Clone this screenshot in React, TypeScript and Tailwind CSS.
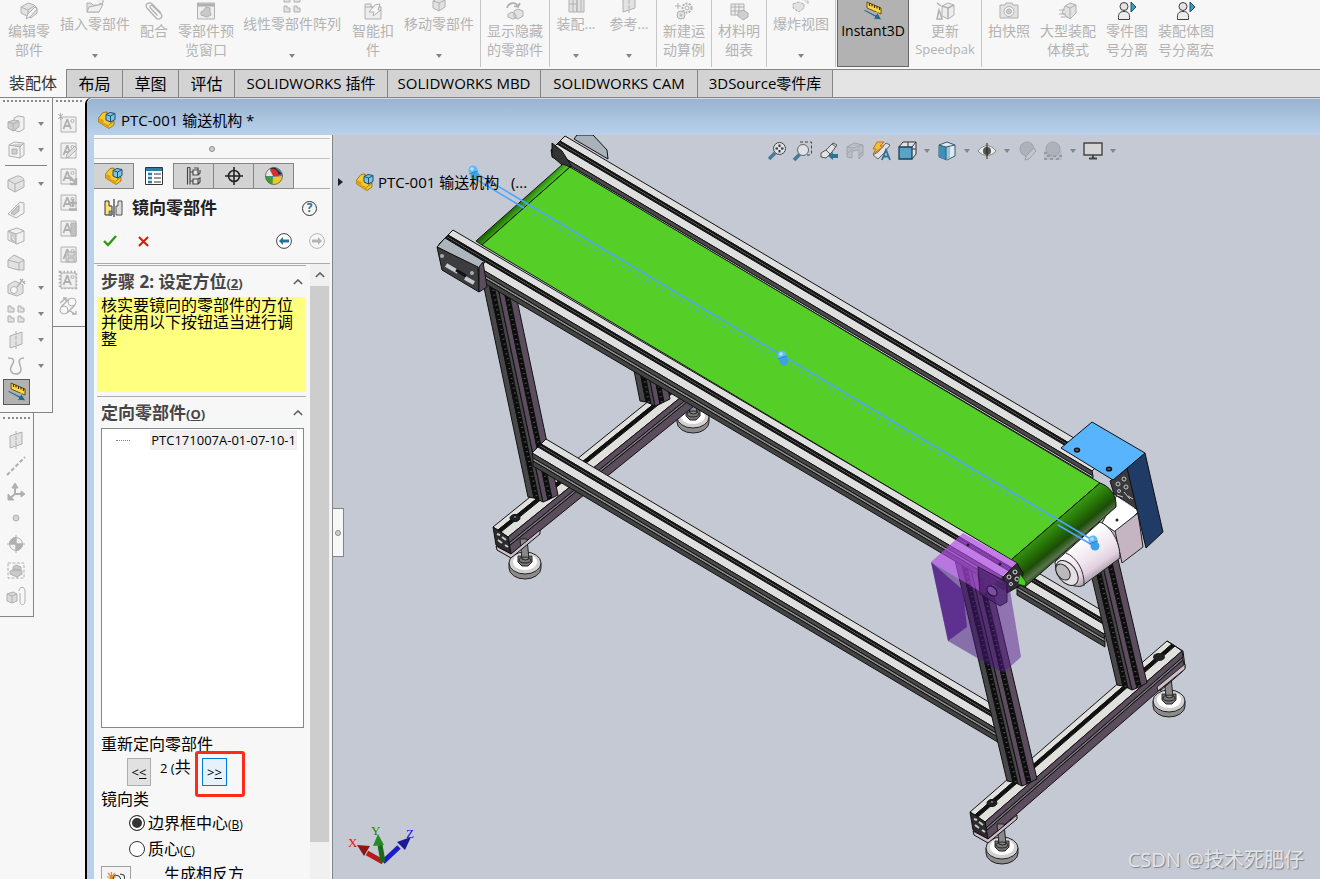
// src/App.tsx
import { useState } from 'react';
import type { ReactNode } from 'react';

type Pt = [number, number];

const G = '#b0b0b0';
const L = '#e2e2e2';

const PartIcon = ({ size = 'size-[18px]' }: { size?: string }) => (
  <svg viewBox="0 0 18 18" className={size}>
    <path d="M.5 7 5 1.500 9 1v7l7 2v4l-5 3.500L.5 11z" fill="#f6c92f" stroke="#8a6410" strokeWidth=".8" />
    <path d="m.5 7 5 2v3l5.500 2v3.500L.5 11z" fill="#dca018" />
    <path d="m11 14 5-4" stroke="#8a6410" strokeWidth=".8" />
    <path d="m8 3.500 4-2L17 2.500v6l-4.500 2.500L8 9z" fill="#7fc4e4" stroke="#1c5070" strokeWidth="1" />
    <path d="m8 3.500 4.500 1.500L17 2.500M12.500 5v6" stroke="#1c5070" strokeWidth="1" fill="none" />
  </svg>
);

const RulerGlyph = (
  <>
    <path d="m3 0 14 6v6L3 6z" fill="#ffd84a" stroke="#5a4300" strokeWidth=".9" />
    <path d="M5.500 1v3M8 2v2.500M10.500 3v3M13 4v2.500M15.500 5v3" stroke="#3d2d00" strokeWidth="1.200" />
    <path d="m0 7 12 6 1-3 5 8-9-1 2-2L0 9z" fill="#22698f" />
  </>
);

const cube = <><path d="m3 6 6-3 6 2v7l-6 4-6-3z" fill={L} /><path d="m3 6 6 2 6-3M9 8v8" /></>;
const noteA = <><path d="M2 2h15v15H2z" fill="#f0f0f0" /><path d="m4.500 14 3.500-9h.5l3.500 9M6 11h5" strokeWidth="1.800" /><circle cx="13.500" cy="6" r="1.500" /></>;
const gear = <><circle cx="12" cy="6" r="4.500" strokeDasharray="2 1.200" strokeWidth="2" /><circle cx="12" cy="6" r="2" /><circle cx="6" cy="13" r="4" fill={L} /><circle cx="6" cy="13" r="1" /><path d="M3 1v6M0 4h6" /></>;
const plane = <><path d="m3 5 12-4v12L3 17z" fill={L} /><path d="M9 0v18" strokeDasharray="4 1" /></>;
const person = <><circle cx="6" cy="4.500" r="4" fill="#e4e4e4" stroke="#3d3d3d" /><path d="M.5 17.500c-.5-6 1-8 5.500-8s6 2 5.500 8z" fill="#ececec" stroke="#3d3d3d" /><path d="M13 0v10l5-5z" fill="#3c9cc4" stroke="#17506c" /></>;

const glyphs: Record<string, ReactNode> = {
  edit: <><path d="m1 5 7-4 6 2 3 3v5l-6 5-10-5z" fill={L} /><path d="m1 5 7 3 6-4M8 8v7" /><path d="m6 17 2-5 7-7 2 2-7 8z" fill="#f7f7f7" /></>,
  folder: <><path d="M1 8h4l2 2h6v7H1z" fill={L} /><path d="m3 12 14-3-4 8H1zM7 2l5-2 5 2v6l-4 1" fill="#f0f0f0" /></>,
  clip: <path d="m16 11-9-9C4-1-1 3 2 6l9 10c3 3 8-1 5-4L8 4C6 2.500 4 4.500 5.500 6l7 7.500" strokeWidth="1.300" />,
  preview: <><path d="M.5 1h17v16H.5z" fill="#ededed" /><path d="M0 3h18" strokeWidth="3" /><path d="m4 10 3-2 2-3 4 1v4l1 3-4 2-6-2z" fill="#c9c9c9" /></>,
  pattern: <path d="M1 1h3v2h3v4H1zM11 1h3v2h3v4h-6zM1 11h3v2h3v4H1zM11 11h3v2h3v4h-6z" fill={L} />,
  smart: <><path d="M1 2h6v3h10v12H1zM1 5h16" fill="#ededed" /><path d="m11 3 5-1-2 6h3l-8 6 1-4H5z" fill="#f7f7f7" /></>,
  cube,
  hide: <><path d="M1 6c1-5 8-7 11-2M14 1l-2 4-4-1" strokeWidth="1.800" /><path d="m8 9 4-2 5 2v5l-5 3-4-2zM2 12l4-2 4 3v3l-3 1-5-2z" fill={L} /></>,
  parts: <><path d="m2 5 4-3 4 3v12H2zM10 5l4-3 3 3v12h-7z" fill={L} /><path d="M6 4v13M14 4v13M2 9h8" /></>,
  plane,
  gear,
  bom: <><path d="M1 2h13v11H1zM1 5h13M1 9h13M5 2v11M9 2v11" fill="#efefef" /><path d="m8 10 5-2 5 3v4l-5 3-5-4z" fill="#cfcfcf" /></>,
  explode: <path d="m1 9 5-2 6 2v4l-5 4-6-4zM7 3l4-1 5 1v6" fill={L} strokeDasharray="3 1" />,
  ruler: RulerGlyph,
  speed: <><path d="m6 4 6-3 6 2v10l-6 4-6-3z" fill="#eee" /><path d="m6 4 6 2 6-3M12 6v11M1 17 3 8l3 9zM1 1l4 3" strokeWidth="1.500" /></>,
  camera: <><path d="M0 3h5l1-2h6l1 2h5v13H0z" fill={L} /><circle cx="9" cy="9.500" r="5" fill="#f4f4f4" /><circle cx="9" cy="9.500" r="2.500" fill="#c9c9c9" /></>,
  big: <><path d="m6 4 5-3 6 2v8l-6 6-8-6z" fill={L} /><path d="m6 4 5 2 6-3M11 6v10M0 8h6M0 12h7M2 15h7" /></>,
  person,
  boss: <><path d="m7 3 4-2 6 1v12l-5 3-5-2z" fill="#f1f1f1" /><path d="m1 7 6-2 5 1v6l-6 4-5-3z" fill="#cfcfcf" /><path d="m1 7 5 2 6-3M6 9v7" /></>,
  pocket: <><path d="m2 4 5-3 10 1v12l-4 3-11-2z" fill="#f1f1f1" /><path d="M2 4l11 2 4-4M13 6v11M5 8h5v5H5z" fill="#cfcfcf" /></>,
  fillet: <><path d="m1 5 9-4c4 0 7 2 7 5v6l-9 5-7-4z" fill={L} /><path d="m1 5 7 4 9-4M8 9v8" /></>,
  rib: <><path d="m1 13 12-12 4 1v10l-8 5z" fill="#f1f1f1" /><path d="m4 12 8-8v6l-5 4z" fill="#c9c9c9" /></>,
  shell: <><path d="m1 4 9-3 7 3v10l-7 3-9-4z" fill="#f1f1f1" /><path d="m1 4 8 3v10M9 7l8-3M4 8v5l5 2" fill="#cfcfcf" /></>,
  draft: <><path d="m1 7 6-5 10 5v10h-6L1 14z" fill={L} /><path d="m1 7 11 3 5-3M12 10v7" /></>,
  hole: <><path d="m1 6 7-4 8 4v8l-6 3-9-3z" fill={L} /><circle cx="7" cy="11" r="3.500" fill="#f7f7f7" /><path d="m10 8 6-8M13 0l5 5M16 4l2-2" strokeWidth="1.400" /></>,
  curve: <path d="M1 1c6 0 7 2 4 7s-1 9 4 9 6-4 4-9 0-7 4-7" strokeWidth="1.500" />,
  note: <>{noteA}<path d="m-1-1 5 5M4-1l-5 5M1.500-2v7" /></>,
  noteEdit: <>{noteA}<path d="m7 17 1-4 8-8 2 3-8 8z" fill="#e0e0e0" /></>,
  noteArrow: <>{noteA}<path d="m11 10 6 6M17 11v6h-6" strokeWidth="2.400" /></>,
  notePlus: <>{noteA}<path d="M14 6v8M10 10h8M10 16.500h8" strokeWidth="2.400" /></>,
  noteLight: <>{noteA}<path d="M12 4h5v13h-5z" fill="#c4c4c4" /><circle cx="14.500" cy="8" r="1" fill="#fff" /><circle cx="14.500" cy="13" r="1" fill="#fff" /></>,
  noteSave: <>{noteA}<path d="M7 7h10v10H7z" fill="#dadada" /><path d="M9 7v4h6V7M9 17v-4h6v4" /></>,
  noteDash: <><path d="M1 1h16v16H1z" strokeDasharray="1.500 2" strokeWidth="2.500" />{noteA}</>,
  belt: <><circle cx="13" cy="5" r="4" /><circle cx="5" cy="13" r="4" /><path d="m2 10 8-8M8 16l8-8M1 6l6-5M4 1h3v3M11 14l5 3M13 17h4v-3" strokeWidth="1.400" /></>,
  axis: <path d="M0 18 18 0" strokeDasharray="4 2" strokeWidth="2" />,
  triad: <><path d="M8 11V2M8 11h9M8 11l-6 5" strokeWidth="2" /><path d="m5 5 3-5 3 5zM14 8l4 3-4 3zM1 11v6h6z" fill={G} /></>,
  point: <circle cx="9" cy="9" r="3" fill="#d5d5d5" />,
  com: <><circle cx="9" cy="9" r="6.500" fill="#f1f1f1" /><path d="M9 2.500V9H2.500A6.500 6.500 0 0 1 9 2.500zM9 15.500V9h6.500A6.500 6.500 0 0 1 9 15.500z" fill={G} /><path d="M9 0v18M0 9h18" /></>,
  bbox: <><path d="M1 2h16v15H1z" strokeDasharray="3 1.500" /><path d="m3 10 5-2 7 2v3l-5 3-7-3zM6 6l3-2 5 2v3H6z" fill="#c9c9c9" /></>,
  mate: <><path d="m0 7 6-2 4 2v7l-5 2-5-2z" fill="#dadada" /><path d="m0 7 5 2 5-2M5 9v7M12 4c0-5 6-5 6 0v10c0 5-5 5-5 0V6" /></>,
};

const Glyph = ({ name }: { name: string }) => (
  <svg viewBox="0 0 18 18" className="size-[18px] shrink-0 overflow-visible" fill="none" stroke={G} strokeWidth="1">
    {glyphs[name]}
  </svg>
);

const Caret = () => (
  <svg viewBox="0 0 6 4" className="h-1 w-1.5 shrink-0">
    <path d="M0 0h6L3 4z" fill="#858585" />
  </svg>
);

interface RibbonItem {
  icon: string;
  lines: string[];
  w: string;
  drop?: boolean;
  sep?: boolean;
}

const ribbon: RibbonItem[] = [
  { icon: 'edit', lines: ['编辑零', '部件'], w: 'w-[58px]' },
  { icon: 'folder', lines: ['插入零部件'], w: 'w-[74px]', drop: true },
  { icon: 'clip', lines: ['配合'], w: 'w-[44px]' },
  { icon: 'preview', lines: ['零部件预', '览窗口'], w: 'w-[60px]' },
  { icon: 'pattern', lines: ['线性零部件阵列'], w: 'w-[112px]', drop: true },
  { icon: 'smart', lines: ['智能扣', '件'], w: 'w-[50px]' },
  { icon: 'cube', lines: ['移动零部件'], w: 'w-[83px]', drop: true, sep: true },
  { icon: 'hide', lines: ['显示隐藏', '的零部件'], w: 'w-[69px]', sep: true },
  { icon: 'parts', lines: ['装配...'], w: 'w-[52px]', drop: true },
  { icon: 'plane', lines: ['参考...'], w: 'w-[55px]', drop: true, sep: true },
  { icon: 'gear', lines: ['新建运', '动算例'], w: 'w-[55px]', sep: true },
  { icon: 'bom', lines: ['材料明', '细表'], w: 'w-[55px]', sep: true },
  { icon: 'explode', lines: ['爆炸视图'], w: 'w-[69px]', drop: true, sep: true },
];

const ribbonEnd: RibbonItem[] = [
  { icon: 'speed', lines: ['更新', 'Speedpak'], w: 'w-[73px]', sep: true },
  { icon: 'camera', lines: ['拍快照'], w: 'w-[54px]' },
  { icon: 'big', lines: ['大型装配', '体模式'], w: 'w-[64px]' },
  { icon: 'person', lines: ['零件图', '号分离'], w: 'w-[54px]' },
  { icon: 'person', lines: ['装配体图', '号分离宏'], w: 'w-[64px]' },
];

const RibbonButton = ({ item }: { item: RibbonItem }) => (
  <button
    type="button"
    className={`flex h-[67px] shrink-0 flex-col items-center text-sm leading-[19px] whitespace-nowrap text-[#b3b3b3] ${item.w} ${
      item.sep ? 'border-r border-[#c6c6c6]' : ''
    }`}
  >
    <span className={item.drop ? '-mt-[5px]' : 'mt-[2px]'}>
      <Glyph name={item.icon} />
    </span>
    <span className="mt-px flex flex-col items-center">
      {item.lines.map((line) => (
        <span key={line} className={line === 'Speedpak' ? 'text-[13px]' : ''}>
          {line}
        </span>
      ))}
    </span>
    {item.drop && (
      <span className="mt-[21px]">
        <Caret />
      </span>
    )}
  </button>
);

const tabs = [
  { label: '布局', w: 'w-[56px]' },
  { label: '草图', w: 'w-[56px]' },
  { label: '评估', w: 'w-[56px]' },
  { label: 'SOLIDWORKS 插件', w: 'w-[153px]' },
  { label: 'SOLIDWORKS MBD', w: 'w-[153px]' },
  { label: 'SOLIDWORKS CAM', w: 'w-[157px]' },
  { label: '3DSource零件库', w: 'w-[135px]' },
];

const featureTools = [
  ['boss', true], ['pocket', true], ['sep', false], ['fillet', true], ['rib', false], ['shell', false], ['draft', false],
  ['hole', true], ['pattern', true], ['plane', true], ['curve', true],
] as [string, boolean][];
const noteTools = ['note', 'noteEdit', 'noteArrow', 'notePlus', 'noteLight', 'noteSave', 'noteDash', 'belt'];
const refTools = ['plane', 'axis', 'triad', 'point', 'com', 'bbox', 'mate'];

const Grip = ({ w }: { w: string }) => <div className={`mx-[3px] border-t-2 border-dotted border-[#8a8a8a] ${w}`} />;

const SideTools = () => (
  <div className="flex w-[85px] shrink-0 items-start bg-[#f7f7f7]">
    <div className="flex w-[53px] flex-col items-start">
      <div className="w-[53px] border-r border-b border-[#858585] pt-[2px] pb-[7px]">
        <Grip w="mb-[9px]" />
        {featureTools.map(([name, drop]) =>
          name === 'sep' ? (
            <div key={name} className="mx-[5px] mt-[2px] mb-[5px] border-t border-[#858585]" />
          ) : (
            <button key={name} type="button" aria-label={name} className="flex h-[26px] w-full items-center gap-[13px] pl-[7px]">
              <Glyph name={name} />
              {drop && <Caret />}
            </button>
          ),
        )}
        <button type="button" aria-label="Instant3D" className="ml-[3px] flex h-[26px] w-[27px] items-center justify-center border border-[#5a5a5a] bg-[#b2b2b2]">
          <Glyph name="ruler" />
        </button>
      </div>
      <div className="w-[34px] border-r border-b border-[#858585] pt-[4px] pb-[7px]">
        <Grip w="mb-[8px]" />
        {refTools.map((name) => (
          <button key={name} type="button" aria-label={name} className="flex h-[26px] w-full items-center pl-[7px]">
            <Glyph name={name} />
          </button>
        ))}
      </div>
    </div>
    <div className="w-[32px] border-b border-[#858585] pt-[2px] pb-[7px]">
      <Grip w="mb-[9px]" />
      {noteTools.map((name) => (
        <button key={name} type="button" aria-label={name} className="flex h-[26px] w-full items-center pl-[6px]">
          <Glyph name={name} />
        </button>
      ))}
    </div>
  </div>
);

const panelTabs: { name: string; icon: ReactNode }[] = [
  { name: '设计树', icon: <PartIcon /> },
  {
    name: '属性',
    icon: (
      <svg viewBox="0 0 18 18" className="size-[18px]">
        <path d="M.5.500h17v17H.5z" fill="#fff" stroke="#333" />
        <path d="M1 1h16v3H1z" fill="#2e7ba3" />
        <path d="M3 7h4M3 11h4M3 15h4" stroke="#2e7ba3" strokeWidth="2.500" />
        <path d="M9 7h7M9 11h7M9 15h7" stroke="#333" />
      </svg>
    ),
  },
  {
    name: '配置',
    icon: (
      <svg viewBox="0 0 18 18" className="size-[18px]" fill="none" stroke="#4a4a4a" strokeWidth="1.200">
        <path d="M2.500.500v17M5 .500v17M2.500.500H5M5 5h3M5 14h3" />
        <path d="M8 3h5v5H8zM8 12h5v5H8zM13 3V1H9M13 8l2-2V3M13 12l2-1v4l-2 2" fill="#e4e4e4" />
      </svg>
    ),
  },
  {
    name: '尺寸',
    icon: (
      <svg viewBox="0 0 18 18" className="size-[18px]" fill="none" stroke="#222" strokeWidth="1.600">
        <circle cx="9" cy="9" r="5.500" />
        <path d="M9 0v18M0 9h18" />
      </svg>
    ),
  },
  {
    name: '外观',
    icon: (
      <svg viewBox="0 0 18 18" className="size-[18px]">
        <circle cx="9" cy="9" r="8.500" fill="#3c8fd0" />
        <path d="M9 9 .5 9A8.500 8.500 0 0 1 6 1.200z" fill="#e6e6e6" />
        <path d="M9 9 5 1.500A8.500 8.500 0 0 1 10 .500L17 7z" fill="#262626" />
        <path d="M8 9 5 3c3-3 9 0 9 7z" fill="#d3302c" />
        <path d="M9 10 .5 9a8.500 8.500 0 0 0 7 8.400z" fill="#3f9c36" />
        <path d="m8 10 9.500-1a8.500 8.500 0 0 1-10 8.400z" fill="#ecc62e" />
        <circle cx="9" cy="9" r="8.500" fill="none" stroke="#555" strokeWidth=".7" />
      </svg>
    ),
  },
];

const Chevron = () => (
  <svg viewBox="0 0 12 7" className="h-[6px] w-[10px]" fill="none" stroke="#5c5c5c" strokeWidth="1.800">
    <path d="m1 6 5-5 5 5" />
  </svg>
);

const SectionHeader = ({ title, hotkey }: { title: string; hotkey: string }) => (
  <div className="flex h-8 items-center justify-between border-t border-[#ababab] pr-[3px] pl-1 text-[#454545]">
    <h2 className="text-[17px] font-bold">
      {title}
      <span className="text-[13px]">
        (<u>{hotkey}</u>)
      </span>
    </h2>
    <button type="button" aria-label={title}>
      <Chevron />
    </button>
  </div>
);

const radios = [
  { id: 'box', label: '边界框中心', hotkey: 'B' },
  { id: 'mass', label: '质心', hotkey: 'C' },
];

const PropertyPanel = () => {
  const [kind, setKind] = useState('box');

  return (
    <aside className="flex w-[239px] shrink-0 flex-col border-r border-[#858585] bg-[#f7f7f7]">
      <div className="mt-[3px] mr-[2px] flex h-[21px] shrink-0 items-center justify-center border-y border-[#c4c4c4]">
        <span className="size-[6px] rounded-full border border-[#8c8c8c] bg-[#cfcfcf]" />
      </div>
      <div className="mt-1 mr-[2px] flex h-[26px] shrink-0">
        {panelTabs.map((tab, i) => (
          <button
            key={tab.name}
            type="button"
            aria-label={tab.name}
            className={`flex w-10 items-center justify-center border-[#858585] ${
              i === 1 ? 'border-r bg-[#f7f7f7]' : 'border-t border-r border-b bg-[#d3d3d3]'
            }`}
          >
            {tab.icon}
          </button>
        ))}
        <div className="flex-1 border-b border-[#ababab]" />
      </div>

      <div className="flex h-[38px] shrink-0 items-center pr-[15px] pl-[10px]">
        <svg viewBox="0 0 19 18" className="h-[18px] w-[19px]">
          <path d="M1 2h4v5h3v9H1z" fill="#ffe27a" stroke="#333" />
          <path d="M5 12h3v4H5z" fill="#58a8d0" stroke="#333" strokeWidth=".5" />
          <path d="M18 2h-4v5h-2v9h6z" fill="#ddd" stroke="#555" />
          <path d="M10 0v18" stroke="#111" />
        </svg>
        <h1 className="ml-[9px] flex-1 text-[17px] font-bold text-[#222]">镜向零部件</h1>
        <button type="button" aria-label="帮助" className="flex size-[15px] items-center justify-center rounded-full border border-[#333] text-xs font-bold text-[#2a7099]">
          ?
        </button>
      </div>
      <div className="flex h-[36px] shrink-0 items-center pr-[7px] pb-[8px] pl-[9px]">
        <button type="button" aria-label="确定">
          <svg viewBox="0 0 14 12" className="h-3 w-[14px]" fill="none" stroke="#2f9a10" strokeWidth="2.400">
            <path d="m1 6 4 4 8-9" />
          </svg>
        </button>
        <button type="button" aria-label="取消" className="ml-[21px]">
          <svg viewBox="0 0 12 12" className="size-[11px]" fill="none" stroke="#d81e05" strokeWidth="2.200">
            <path d="m1 1 10 10M11 1 1 11" />
          </svg>
        </button>
        <span className="flex-1" />
        <button type="button" aria-label="上一步">
          <svg viewBox="0 0 16 16" className="size-4">
            <circle cx="8" cy="8" r="7.400" fill="#fff" stroke="#444" />
            <path d="m3 8 4-4v2.500h6v3H7V12z" fill="#2a7099" />
          </svg>
        </button>
        <button type="button" aria-label="下一步" className="ml-[17px]">
          <svg viewBox="0 0 16 16" className="size-4">
            <circle cx="8" cy="8" r="7.400" fill="#f7f7f7" stroke="#b5b5b5" />
            <path d="m13 8-4-4v2.500H3v3h6V12z" fill="#b5b5b5" />
          </svg>
        </button>
      </div>

      <div className="mr-[2px] flex min-h-0 flex-1 overflow-hidden border-t border-[#ababab]">
        <div className="min-w-0 flex-1 pt-px pr-1 pl-[3px]">
          <SectionHeader title="步骤 2: 设定方位" hotkey="2" />
          <p className="mb-1 h-[95px] bg-[#ffff80] px-1 text-base leading-[17px]">
            核实要镜向的零部件的方位并使用以下按钮适当进行调整
          </p>
          <SectionHeader title="定向零部件" hotkey="O" />
          <div className="pl-1">
            <ul className="mr-[2px] h-[300px] border border-[#828790] bg-white pt-px">
              <li className="flex h-[20px] items-center justify-between pr-[6px] pl-[14px]">
                <span className="w-[14px] border-t border-dotted border-[#808080]" />
                <span className="bg-[#f0f0f0] px-px text-[13px] leading-5">PTC171007A-01-07-10-1</span>
              </li>
            </ul>
            <div className="mt-1 h-[26px] text-base leading-6">重新定向零部件</div>
            <div className="flex h-[28px] items-start pl-[26px]">
              <button type="button" className="h-[28px] w-6 border border-[#adadad] bg-[#e1e1e1] text-[13px] leading-none">
                &lt;<u>&lt;</u>
              </button>
              <span className="w-[51px] pl-[9px] text-base leading-[18px] whitespace-nowrap">
                <span className="text-[13px]">2 (</span>共
              </span>
              <span className="relative">
                <button type="button" className="h-[28px] w-[25px] border border-[#0078d7] bg-[#e5f1fb] text-[13px] leading-none">
                  &gt;<u>&gt;</u>
                </button>
                <span className="pointer-events-none absolute -top-[7px] -left-[7px] h-[46px] w-[50px] rounded-[3px] border-3 border-[#ff2a1a]" />
              </span>
            </div>
            <div className="h-6 text-base leading-[26px]">镜向类</div>
            {radios.map((r) => (
              <div key={r.id} className="flex h-[26px] items-center pl-[28px]">
                <input
                  id={r.id}
                  type="radio"
                  name="mirror-kind"
                  checked={kind === r.id}
                  onChange={() => setKind(r.id)}
                  className="size-4 shrink-0 appearance-none rounded-full border border-[#333] bg-white checked:border-[#333] checked:bg-[#333] checked:shadow-[inset_0_0_0_2px_white]"
                />
                <label htmlFor={r.id} className="ml-[3px] text-base whitespace-nowrap">
                  {r.label}
                  <span className="text-xs">
                    (<u>{r.hotkey}</u>)
                  </span>
                </label>
              </div>
            ))}
            <div className="mt-[4px] flex items-start">
              <button type="button" aria-label="生成相反方位版本" className="flex h-[28px] w-[30px] items-center justify-center border border-[#a0a0a0] bg-[#f4f4f4]">
                <svg viewBox="0 0 18 18" className="size-[18px]" fill="none">
                  <path d="M0 6h9M4.500 1v10M1 2l7 8M8 2l-7 8" stroke="#e08a2a" strokeWidth="1.200" />
                  <path d="m8 4 4 1 3 5-4 2-5-5zM13 3l4 1 1 5-3 1" stroke="#333" />
                </svg>
              </button>
              <span className="ml-[33px] text-base leading-4 whitespace-nowrap">生成相反方</span>
            </div>
          </div>
        </div>
        <div className="flex w-[20px] shrink-0 flex-col bg-[#f0f0f0] pr-px">
          <button type="button" aria-label="向上滚动" className="flex h-[22px] items-center justify-center">
            <Chevron />
          </button>
          <div className="h-[556px] bg-[#cdcdcd]" />
        </div>
      </div>
    </aside>
  );
};

// band: offsets of its two long edges from the beam's reference edge
type Band = [number, number, number, number, string];

const Beam = ({ from, to, bands }: { from: Pt; to: Pt; bands: Band[] }) => (
  <g strokeWidth="1" stroke="#111" strokeLinejoin="round">
    {bands.map(([ax, ay, bx, by, fill], i) => (
      <polygon
        key={i}
        fill={fill}
        points={`${from[0] + ax},${from[1] + ay} ${to[0] + ax},${to[1] + ay} ${to[0] + bx},${to[1] + by} ${from[0] + bx},${from[1] + by}`}
      />
    ))}
  </g>
);

const longRail: Band[] = [
  [0, 0, -5, 5, '#dfdfdf'],
  [-5, 5, -8, 8, '#1a1a1a'],
  [-6, 6, -7, 7, '#8d8d8d'],
  [-8, 8, -14, 14, '#dfdfdf'],
  [-14, 14, -13, 19, '#4a4a4b'],
  [-13, 19, -13, 22, '#8a8a8a'],
  [-13, 22, -13, 27, '#434344'],
];

const backRail: Band[] = [...longRail.slice(0, 4), [-14, 14, -13, 19, '#4a4a4b'], [-13, 19, -13, 21, '#cfcfcf']];

const leg: Band[] = [
  [0, 0, 6, 1, '#474749'],
  [6, 1, 11, 3, '#0c0c0c'],
  [11, 3, 15, 5, '#474749'],
  [15, 5, 20, 3, '#5b4d5d'],
  [20, 3, 24, 1, '#0c0c0c'],
  [24, 1, 30, -2, '#5b4d5d'],
];

const crossBar: Band[] = [
  [0, 0, 5, 3, '#e0e1dd'],
  [5, 3, 8, 5, '#111'],
  [8, 5, 15, 10, '#e0e1dd'],
  [15, 10, 16, 16, '#5b4d5d'],
  [16, 16, 16, 19, '#777'],
  [16, 19, 18, 27, '#5b4d5d'],
];

const Leg = ({ from, to }: { from: Pt; to: Pt }) => (
  <>
    <Beam from={from} to={to} bands={leg} />
    <g stroke="#55555a" strokeWidth="2" strokeDasharray="1 4">
      <path d={`M${from[0] + 9} ${from[1] + 2}L${to[0] + 9} ${to[1] + 2}`} />
      <path d={`M${from[0] + 22} ${from[1] + 2}L${to[0] + 22} ${to[1] + 2}`} />
    </g>
  </>
);

const Foot = ({ x, y }: { x: number; y: number }) => (
  <g stroke="#222" strokeWidth="1">
    <path d={`M${x - 16} ${y - 2}v5a16 11 0 0 0 32 0v-5z`} fill="#8d8a8c" />
    <ellipse cx={x} cy={y - 2} rx="16" ry="11" fill="#d0d0d0" />
    <ellipse cx={x} cy={y - 3} rx="12" ry="8" fill="#fff" stroke="none" />
    <path d={`M${x - 7} ${y - 9}v6l4 4h6l4-4v-6z`} fill="#777" />
    <path d={`M${x - 5} ${y - 26}h7l2 20a5 3 0 0 1-7 0z`} fill="#8a878c" />
    <ellipse cx={x} cy={y - 5} rx="6" ry="3" fill="none" />
  </g>
);

const EndCap = ({ x, y }: { x: number; y: number }) => (
  <g stroke="#111">
    <path d={`M${x} ${y}l15 10 3 17-15-9z`} fill="#2c2c2e" />
    <path d={`M${x + 4} ${y + 7}l3 1M${x + 9} ${y + 10}l4 3M${x + 5} ${y + 13}l4 3M${x + 12} ${y + 18}l3 2`} stroke="#c9c9c9" strokeWidth="2" />
    <path d={`M${x + 3} ${y + 19}l15 8 29-24v4l-29 24-14-8z`} fill="#cdbecb" />
    <ellipse cx={x + 22} cy={y - 9} rx="5" ry="3.500" fill="#222" />
    <ellipse cx={x + 22} cy={y - 10} rx="2" ry="1.500" fill="#777" />
  </g>
);

const Ball = ({ x, y }: { x: number; y: number }) => (
  <g>
    <circle cx={x - 1} cy={y - 3} r="4.500" fill="#5cb9f4" />
    <circle cx={x + 1} cy={y + 3} r="4.500" fill="#3fa2e6" />
    <circle cx={x - 2} cy={y - 4} r="1.800" fill="#b3e3ff" />
    <path d={`M${x - 5} ${y + 1}l9-3`} stroke="#2a86cc" />
  </g>
);

const Conveyor = () => (
  <svg viewBox="333 135 987 744" preserveAspectRatio="xMinYMin slice" className="h-full w-full" aria-label="PTC-001 输送机构">
    <defs>
      <linearGradient id="roller" gradientUnits="userSpaceOnUse" x1="1056" y1="520" x2="1078" y2="547">
        <stop offset="0" stopColor="#379a12" />
        <stop offset=".35" stopColor="#256f06" />
        <stop offset=".6" stopColor="#1d4d08" />
        <stop offset=".8" stopColor="#56734a" />
        <stop offset="1" stopColor="#1f3f12" />
      </linearGradient>
      <linearGradient id="tail" gradientUnits="userSpaceOnUse" x1="520" y1="200" x2="527" y2="207">
        <stop offset="0" stopColor="#1d6a05" />
        <stop offset="1" stopColor="#49c421" />
      </linearGradient>
      <linearGradient id="motor" gradientUnits="userSpaceOnUse" x1="1078" y1="540" x2="1102" y2="575">
        <stop offset="0" stopColor="#fff" />
        <stop offset=".5" stopColor="#efe6ee" />
        <stop offset=".75" stopColor="#e3d0e2" />
        <stop offset="1" stopColor="#9c949d" />
      </linearGradient>
    </defs>

    {/* rear frame */}
    <Foot x={693} y={419} />
    <Beam from={[493, 527]} to={[676, 379]} bands={crossBar} />
    <Leg from={[631, 355]} to={[640, 401]} />
    <Beam from={[1030, 568]} to={[1118, 620]} bands={longRail} />
    <Foot x={1169} y={703} />
    <Beam from={[970, 812]} to={[1167, 641]} bands={crossBar} />
    <path d="m1167 641 8 5 8 5 2 16-2 4-23 20 0-5 22-19" fill="none" stroke="#111" />
    <path d="m1157 687 28-23v5l-27 22z" fill="#cdbecb" stroke="#222" />
    <ellipse cx="1159" cy="657" rx="6" ry="4" fill="#222" />
    <Leg from={[1087, 557]} to={[1117, 685]} />

    {/* front legs and stretcher */}
    <Foot x={525} y={565} />
    <EndCap x={493} y={527} />
    <Leg from={[482, 278]} to={[528, 497]} />
    <Beam from={[546, 439]} to={[1014, 717]} bands={longRail} />
    <Foot x={1002} y={850} />
    <EndCap x={970} y={812} />
    <Leg from={[955, 560]} to={[1007, 781]} />

    {/* back rail */}
    <path d="M577 135h16l14 15 1 9-34-20z" fill="#a9b1ba" stroke="#111" />
    <Beam from={[565, 136]} to={[1106, 457]} bands={backRail} />
    <path d="m552 143 0 13 10 9 10 2-10-16z" fill="#333" stroke="#111" />

    {/* belt */}
    <path d="M482 245 570 167l-7-3-87 77z" fill="url(#tail)" stroke="#111" />
    <polygon points="482,245 570,167 1100,483 1011,560" fill="#55cf28" stroke="#111" />

    {/* motor and gearbox */}
    <path d="m1102 523 15-28 22 16-22 22z" fill="#fff" stroke="#222" />
    <path d="m1115 531 23-18 5 34-21 16z" fill="#c5b4c2" stroke="#222" />
    <path d="m1055 562 45-40c10 4 20 18 20 36l-38 28c-12 3-26-10-27-24z" fill="url(#motor)" stroke="#222" />
    <path d="M1066 553c10 4 19 17 18 33" fill="none" stroke="#333" />
    <ellipse cx="1067" cy="573" rx="14" ry="9" transform="rotate(52 1067 573)" fill="#e4e0e4" stroke="#222" />
    <ellipse cx="1063" cy="572" rx="9" ry="6" transform="rotate(52 1063 572)" fill="#bcb9bc" stroke="#222" />
    <circle cx="1117" cy="520" r="1.500" fill="#222" />
    <path d="M1100 483c9 3 17 12 16 24l-91 80c-6-2-12-12-14-27z" fill="url(#roller)" stroke="#111" />

    {/* cover */}
    <path d="m1110 481 18-13 10 42-24-16z" fill="#3a3a3c" stroke="#111" />
    <g fill="none" stroke="#c8c8c8">
      <circle cx="1118" cy="484" r="2" />
      <circle cx="1124" cy="479" r="2" />
      <circle cx="1126" cy="487" r="2" />
      <circle cx="1119" cy="491" r="1.500" />
      <path d="m1117 495 6 2M1124 492l6 7M1122 500l12 8M1128 496l5 3" />
    </g>
    <polygon points="1145,453 1163,532 1146,548 1127,468" fill="#203b66" stroke="#111" />
    <polygon points="1092,422 1145,453 1113,480 1061,448" fill="#58b4fd" stroke="#111" />
    <g fill="#57606a" stroke="#111" strokeWidth="1.500">
      <ellipse cx="1077" cy="450" rx="2.500" ry="1.800" />
      <ellipse cx="1109" cy="469" rx="2.500" ry="1.800" />
    </g>

    {/* front rail */}
    <Beam from={[453, 230]} to={[1017, 563]} bands={longRail} />
    <path d="m1003 577 14-14 6 10-2 12-14 8z" fill="#2b2b2d" stroke="#111" />
    <g fill="none" stroke="#ddd">
      <circle cx="1009" cy="577" r="2" />
      <circle cx="1015" cy="572" r="2" />
      <circle cx="1011" cy="584" r="1.500" />
      <circle cx="1017" cy="579" r="2" />
    </g>
    <path d="m1020 574 6 8-1 4-7-2z" fill="#42d419" stroke="#111" strokeWidth=".5" />
    <path d="m445 238-8 9 42 22 6-7z" fill="#aeb6bd" stroke="#111" />
    <path d="m437 247 5 23 37 22-1-25z" fill="#3d3d40" stroke="#111" />
    <path d="m479 267 4-5 4 25-8 5z" fill="#5b4d5d" stroke="#111" />
    <path d="m446 265 12 7M465 278l9 5" stroke="#c5c9d2" strokeWidth="4" />
    <path d="m456 270 10 6" stroke="#111" strokeWidth="3" />
    <circle cx="442" cy="256" r="2" fill="#aaa" />
    <circle cx="472" cy="273" r="2" fill="#aaa" />

    {/* mirrored cover preview */}
    <polygon points="931,562 963,590 967,627 948,641" fill="#5b2a96" opacity=".78" />
    <polygon points="963,533 1017,563 984,594 931,562" fill="#b14be8" opacity=".66" />
    <polygon points="931,562 984,594 1003,673 948,641" fill="#4a1580" opacity=".5" />
    <polygon points="984,594 1008,578 1021,657 1003,673" fill="#5a2090" opacity=".5" />
    <path d="m978 567 29 15v20l-7 4-20-12z" fill="#4e2371" opacity=".8" stroke="#221133" />
    <ellipse cx="992" cy="591" rx="6" ry="4" transform="rotate(45 992 591)" fill="#7a4ca3" stroke="#1d0f2c" />
    <circle cx="968" cy="545" r="1.500" fill="#222" />
    <circle cx="1000" cy="564" r="1.500" fill="#222" />

    {/* mirror axis */}
    <g stroke="#4fa4ff" fill="none">
      <path d="M474 172 1094 541" strokeWidth="1.600" />
      <path d="m474 178 50 30M1058 525l36 21" strokeWidth="1.600" />
      <path d="m524 208 534 317" strokeDasharray="5 5" />
    </g>
    <Ball x={474} y={173} />
    <Ball x={783} y={358} />
    <Ball x={1094} y={543} />

    {/* triad */}
    <g strokeWidth="5">
      <path d="m383 862-16-9" stroke="#b51c1c" />
      <path d="m357 845 13 1-6 10z" fill="#8d1717" />
      <path d="m383 862 16-15" stroke="#1c1cc8" />
      <path d="m411 837-6 13-8-8z" fill="#1a1a95" />
      <path d="m383 862-3-17" stroke="#1b6a1b" />
      <path d="m378 834 6 11-11 1z" fill="#258a25" />
    </g>
    <g fontFamily="Liberation Serif, serif" fontSize="13">
      <text x="348" y="847" fill="#f01010">X</text>
      <text x="371" y="835" fill="#108a10">Y</text>
      <text x="406" y="838" fill="#1010f0">Z</text>
    </g>
  </svg>
);

const sphere = <circle cx="9" cy="7" r="7" fill="#aeb2bb" stroke="#9da1aa" />;

const viewTools: { name: string; drop?: boolean; icon: ReactNode }[] = [
  { name: '整屏显示全图', icon: <><path d="m1 17 6-6" stroke="#477a98" strokeWidth="3.500" /><circle cx="11.500" cy="6.500" r="6" fill="#dfe3e9" stroke="#444" /><path d="M11.500 2.500v2.500M11.500 8v2.500M7.500 6.500h2.500M13 6.500h2.500" stroke="#333" strokeWidth="2" /></> },
  { name: '局部放大', icon: <><path d="M6 0h11.500v12M13 13h4" stroke="#444" strokeDasharray="3 2" /><path d="m0 18 6-6" stroke="#477a98" strokeWidth="3.500" /><circle cx="9" cy="8" r="5.500" fill="#dfe3e9" stroke="#666" /></> },
  { name: '上一视图', icon: <><path d="m1 11 5-3 7-7 4 2-5 7-6 6-5-1z" fill="#e2e2e2" stroke="#555" /><path d="m6 8 4 4M12 2l4 3" stroke="#555" /><path d="m8 14 5-4v2h5v4h-5v2z" fill="#2f7396" /></> },
  { name: '剖面视图', icon: <><path d="m1 5 7-4 9 2v10l-4 4V8L6 9v7l-5-1zM1 5l6 1 10-3" fill="#b9bdc6" stroke="#a0a4ad" /><path d="m1 12 5-5M13 14l4-5" stroke="#a0a4ad" /></> },
  { name: '动态注解视图', icon: <><path d="m1 13 5-3 8-9 4 2-6 8-6 6z" fill="#e2e2e2" stroke="#666" /><path d="m5 0 7 0-4 4h4L1 12l3-5H1z" fill="#f2c233" stroke="#cc6b1e" /><path d="m10 18 4-10 4 10M11.500 14.500h5" stroke="#2f7396" strokeWidth="1.800" /></> },
  { name: '视图定向', drop: true, icon: <><path d="m1 5 4-5h13v12l-4 5M14 5l4-5M10 0v5M18 7h-4" fill="#dfe3e9" stroke="#333" /><path d="M1 5h13v12H1z" fill="#5ba3c6" stroke="#1c4258" strokeWidth="1.300" /></> },
  { name: '显示样式', drop: true, icon: <><path d="m1 3 8-3 8 3v11l-8 4-8-3z" fill="#dfe9ef" stroke="#3a5a6a" /><path d="m1 3 7 2v13l-7-3z" fill="#3e90b8" /><path d="m8 5 4-1v12l-4 2z" fill="#8fc6df" /><path d="m1 3 7 2 9-2M8 5v13" stroke="#3a5a6a" /></> },
  { name: '隐藏/显示', drop: true, icon: <><path d="M0 9c5-7 13-7 18 0-5 6-13 6-18 0z" fill="#ececec" stroke="#888" /><circle cx="9" cy="9" r="4" fill="#555" /><path d="M9 1v16" stroke="#222" /></> },
  { name: '编辑外观', icon: <>{sphere}<path d="m7 18 1-4 8-8 2 3-7 8z" fill="#c3c6cd" stroke="#9da1aa" /></> },
  { name: '应用布景', drop: true, icon: <><path d="M0 9h18v9H0z" fill="#b9bcc4" /><path d="M0 11h18M3 14h18M0 17h18" stroke="#959aa3" strokeWidth="2" strokeDasharray="3 3" />{sphere}</> },
  { name: '视图设定', drop: true, icon: <><path d="M0 1h18v12H0z" fill="#d5d5d5" stroke="#444" strokeWidth="1.400" /><path d="M9 13v4M5 16.500h8" stroke="#444" strokeWidth="2" /></> },
];

const Viewport = () => (
  <main className="relative min-w-0 flex-1 overflow-hidden bg-[#c5c9d3]">
    <Conveyor />
    <div className="absolute top-[36px] left-[5px] flex items-center text-[15px] whitespace-nowrap">
      <svg viewBox="0 0 5 8" className="h-2 w-[5px]">
        <path d="m0 0 5 4-5 4z" fill="#222" />
      </svg>
      <span className="ml-[13px]">
        <PartIcon />
      </span>
      <span className="ml-1">PTC-001 输送机构&nbsp;&nbsp; (...</span>
    </div>
    <div className="absolute top-[7px] left-[431px] flex h-[18px] items-center">
      {viewTools.map((tool) => (
        <button key={tool.name} type="button" aria-label={tool.name} className="flex items-center">
          <span className="flex w-[26px] justify-center">
            <svg viewBox="0 0 18 18" className="size-[18px] overflow-visible" fill="none">
              {tool.icon}
            </svg>
          </span>
          {tool.drop && (
            <span className="flex w-[14px] justify-center">
              <Caret />
            </span>
          )}
        </button>
      ))}
    </div>
    <button type="button" aria-label="折叠面板" className="absolute top-[373px] left-0 flex h-[49px] w-[11px] items-center justify-center border-y border-r border-[#858585] bg-[#f7f7f7]">
      <span className="size-[6px] rounded-full border border-[#8c8c8c] bg-[#cfcfcf]" />
    </button>
    <span className="absolute right-4 bottom-[5px] text-[20px] leading-7 whitespace-nowrap text-[#e2e4e9] [text-shadow:1px_1px_1px_#7d8088]">
      CSDN @技术死肥仔
    </span>
  </main>
);

export default function App() {
  return (
    <div className="flex h-screen flex-col overflow-hidden bg-[#f7f7f7] font-['Open_Sans','Noto_Sans_CJK_SC',sans-serif] text-black">
      <header className="flex h-[69px] shrink-0 overflow-hidden">
        {ribbon.map((item) => (
          <RibbonButton key={item.lines[0]} item={item} />
        ))}
        <button type="button" className="ml-px flex h-[67px] w-[72px] shrink-0 flex-col items-center border border-t-0 border-[#666] bg-[#b2b2b2] pt-[2px] text-sm leading-[19px]">
          <Glyph name="ruler" />
          <span className="mt-px">Instant3D</span>
        </button>
        {ribbonEnd.map((item) => (
          <RibbonButton key={item.lines[0]} item={item} />
        ))}
      </header>

      <nav className="flex h-[29px] shrink-0 bg-[#e4e4e4] text-base">
        <button type="button" className="w-[66px] shrink-0 border-b border-[#858585] bg-[#f7f7f7] text-[#333]">
          装配体
        </button>
        <div className="flex flex-1 border-t border-b border-l border-[#858585]">
          {tabs.map((tab) => (
            <button
              key={tab.label}
              type="button"
              className={`shrink-0 border-r border-[#858585] bg-[#d3d3d3] whitespace-nowrap ${/[A-Z]/.test(tab.label) ? 'text-[15px]' : 'text-base'} ${tab.w}`}
            >
              {tab.label}
            </button>
          ))}
        </div>
      </nav>

      <div className="flex min-h-0 flex-1">
        <SideTools />
        <section className="flex min-w-0 flex-1 flex-col rounded-tl-md border-l-2 border-black bg-[#b9d1ea]">
          <div className="flex h-[37px] shrink-0 items-center rounded-tl-md border-t border-[#cfdded] bg-linear-to-b from-[#99b4d1] to-[#b9d1ea] pt-[6px] pl-[11px]">
            <PartIcon />
            <span className="ml-[5px] text-[15px]">PTC-001 输送机构 *</span>
          </div>
          <div className="flex min-h-0 flex-1 pl-[7px]">
            <PropertyPanel />
            <Viewport />
          </div>
        </section>
      </div>
    </div>
  );
}
